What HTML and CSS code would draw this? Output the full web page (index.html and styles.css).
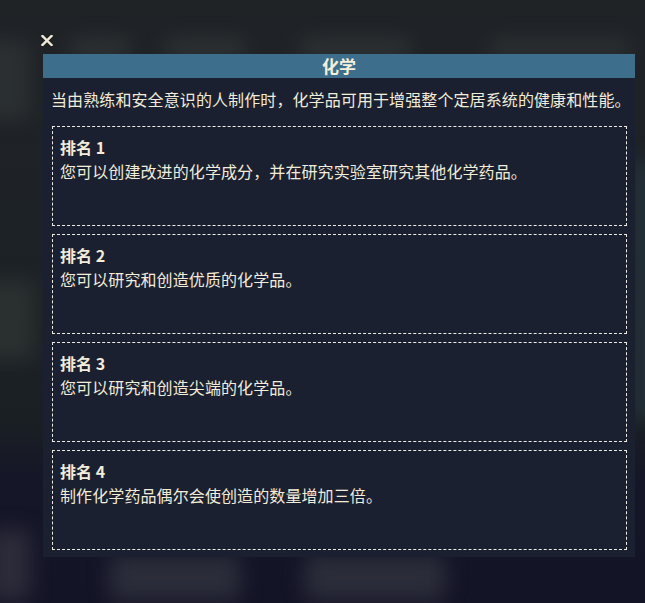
FILE: index.html
```html
<!DOCTYPE html>
<html lang="zh-CN">
<head>
<meta charset="utf-8">
<title>化学</title>
<link rel="stylesheet" href="styles.css">
</head>
<body>
<div class="backdrop">
  <div class="blob b1"></div>
  <div class="blob b2"></div>
  <div class="blob b3"></div>
  <div class="blob b4"></div>
  <div class="blob b5"></div>
  <div class="blob b6"></div>
  <div class="blob b7"></div>
  <div class="blob b8"></div>
  <div class="blob b9"></div>
  <div class="blob b10"></div>
</div>
<div class="modal">
  <div class="close">
    <svg width="12" height="11" viewBox="0 0 12 11"><path d="M1.5 1 L10.5 10 M10.5 1 L1.5 10" stroke="#f3ecd8" stroke-width="2.4" stroke-linecap="square"/></svg>
  </div>
  <div class="panel">
    <div class="header">化学</div>
    <p class="desc">当由熟练和安全意识的人制作时，化学品可用于增强整个定居系统的健康和性能。</p>
    <div class="cards">
      <div class="card">
        <div class="card-title">排名 1</div>
        <div class="card-text">您可以创建改进的化学成分，并在研究实验室研究其他化学药品。</div>
      </div>
      <div class="card">
        <div class="card-title">排名 2</div>
        <div class="card-text">您可以研究和创造优质的化学品。</div>
      </div>
      <div class="card">
        <div class="card-title">排名 3</div>
        <div class="card-text">您可以研究和创造尖端的化学品。</div>
      </div>
      <div class="card">
        <div class="card-title">排名 4</div>
        <div class="card-text">制作化学药品偶尔会使创造的数量增加三倍。</div>
      </div>
    </div>
  </div>
</div>
</body>
</html>
```
FILE: styles.css
```css
html, body {
  margin: 0;
  padding: 0;
  width: 645px;
  height: 603px;
  overflow: hidden;
}
body {
  background: linear-gradient(180deg, #1f2326 0%, #1d2226 40%, #1a1f24 70%, #151628 80%, #141427 100%);
  font-family: "Noto Sans CJK SC", "Noto Sans", sans-serif;
  color: #f2ecd9;
  position: relative;
}
.backdrop {
  position: absolute;
  inset: 0;
  overflow: hidden;
}
.blob {
  position: absolute;
  filter: blur(10px);
  background: #33383a;
  border-radius: 6px;
}
.b1 { left: 70px; top: 38px; width: 60px; height: 22px; opacity: .7; }
.b2 { left: 165px; top: 38px; width: 80px; height: 22px; opacity: .7; }
.b3 { left: 300px; top: 38px; width: 110px; height: 22px; opacity: .7; }
.b4 { left: 490px; top: 38px; width: 140px; height: 22px; opacity: .6; }
.b5 { left: -20px; top: 40px; width: 50px; height: 80px; opacity: .6; }
.b6 { left: -20px; top: 280px; width: 55px; height: 80px; background: #2e3433; opacity: .8; }
.b7 { left: -10px; top: 530px; width: 40px; height: 70px; background: #2c2c3a; }
.b8 { left: 110px; top: 555px; width: 130px; height: 45px; background: #2c2d3a; }
.b9 { left: 305px; top: 555px; width: 140px; height: 45px; background: #2c2d3a; }
.b10 { left: 630px; top: 160px; width: 30px; height: 260px; background: #233038; }

.modal {
  position: absolute;
  left: 41px;
  top: 35px;
  width: 594px;
}
.close {
  width: 12px;
  height: 11px;
  margin-bottom: 8px;
}
.close svg {
  display: block;
}
.panel {
  margin-left: 2px;
  width: 592px;
  background: #1a2030;
  padding-bottom: 7px;
}
.header {
  background: #3d6e8b;
  height: 24px;
  line-height: 24px;
  text-align: center;
  font-size: 17px;
  font-weight: 700;
  color: #f5eedb;
}
.desc {
  margin: 0;
  padding: 9px 0 0 8px;
  font-size: 16px;
  line-height: 24px;
  height: 24px;
  white-space: nowrap;
  letter-spacing: 0.1px;
}
.cards {
  display: flex;
  flex-direction: column;
  gap: 8px;
  padding: 15px 8px 0 9px;
}
.card {
  border: 1px dashed #f0ede6;
  padding: 8px 0 0 7px;
  box-sizing: border-box;
  height: 100px;
}
.card-title {
  font-size: 16px;
  font-weight: 700;
  line-height: 24px;
}
.card-text {
  font-size: 16px;
  line-height: 24px;
  letter-spacing: 0.1px;
}
```
